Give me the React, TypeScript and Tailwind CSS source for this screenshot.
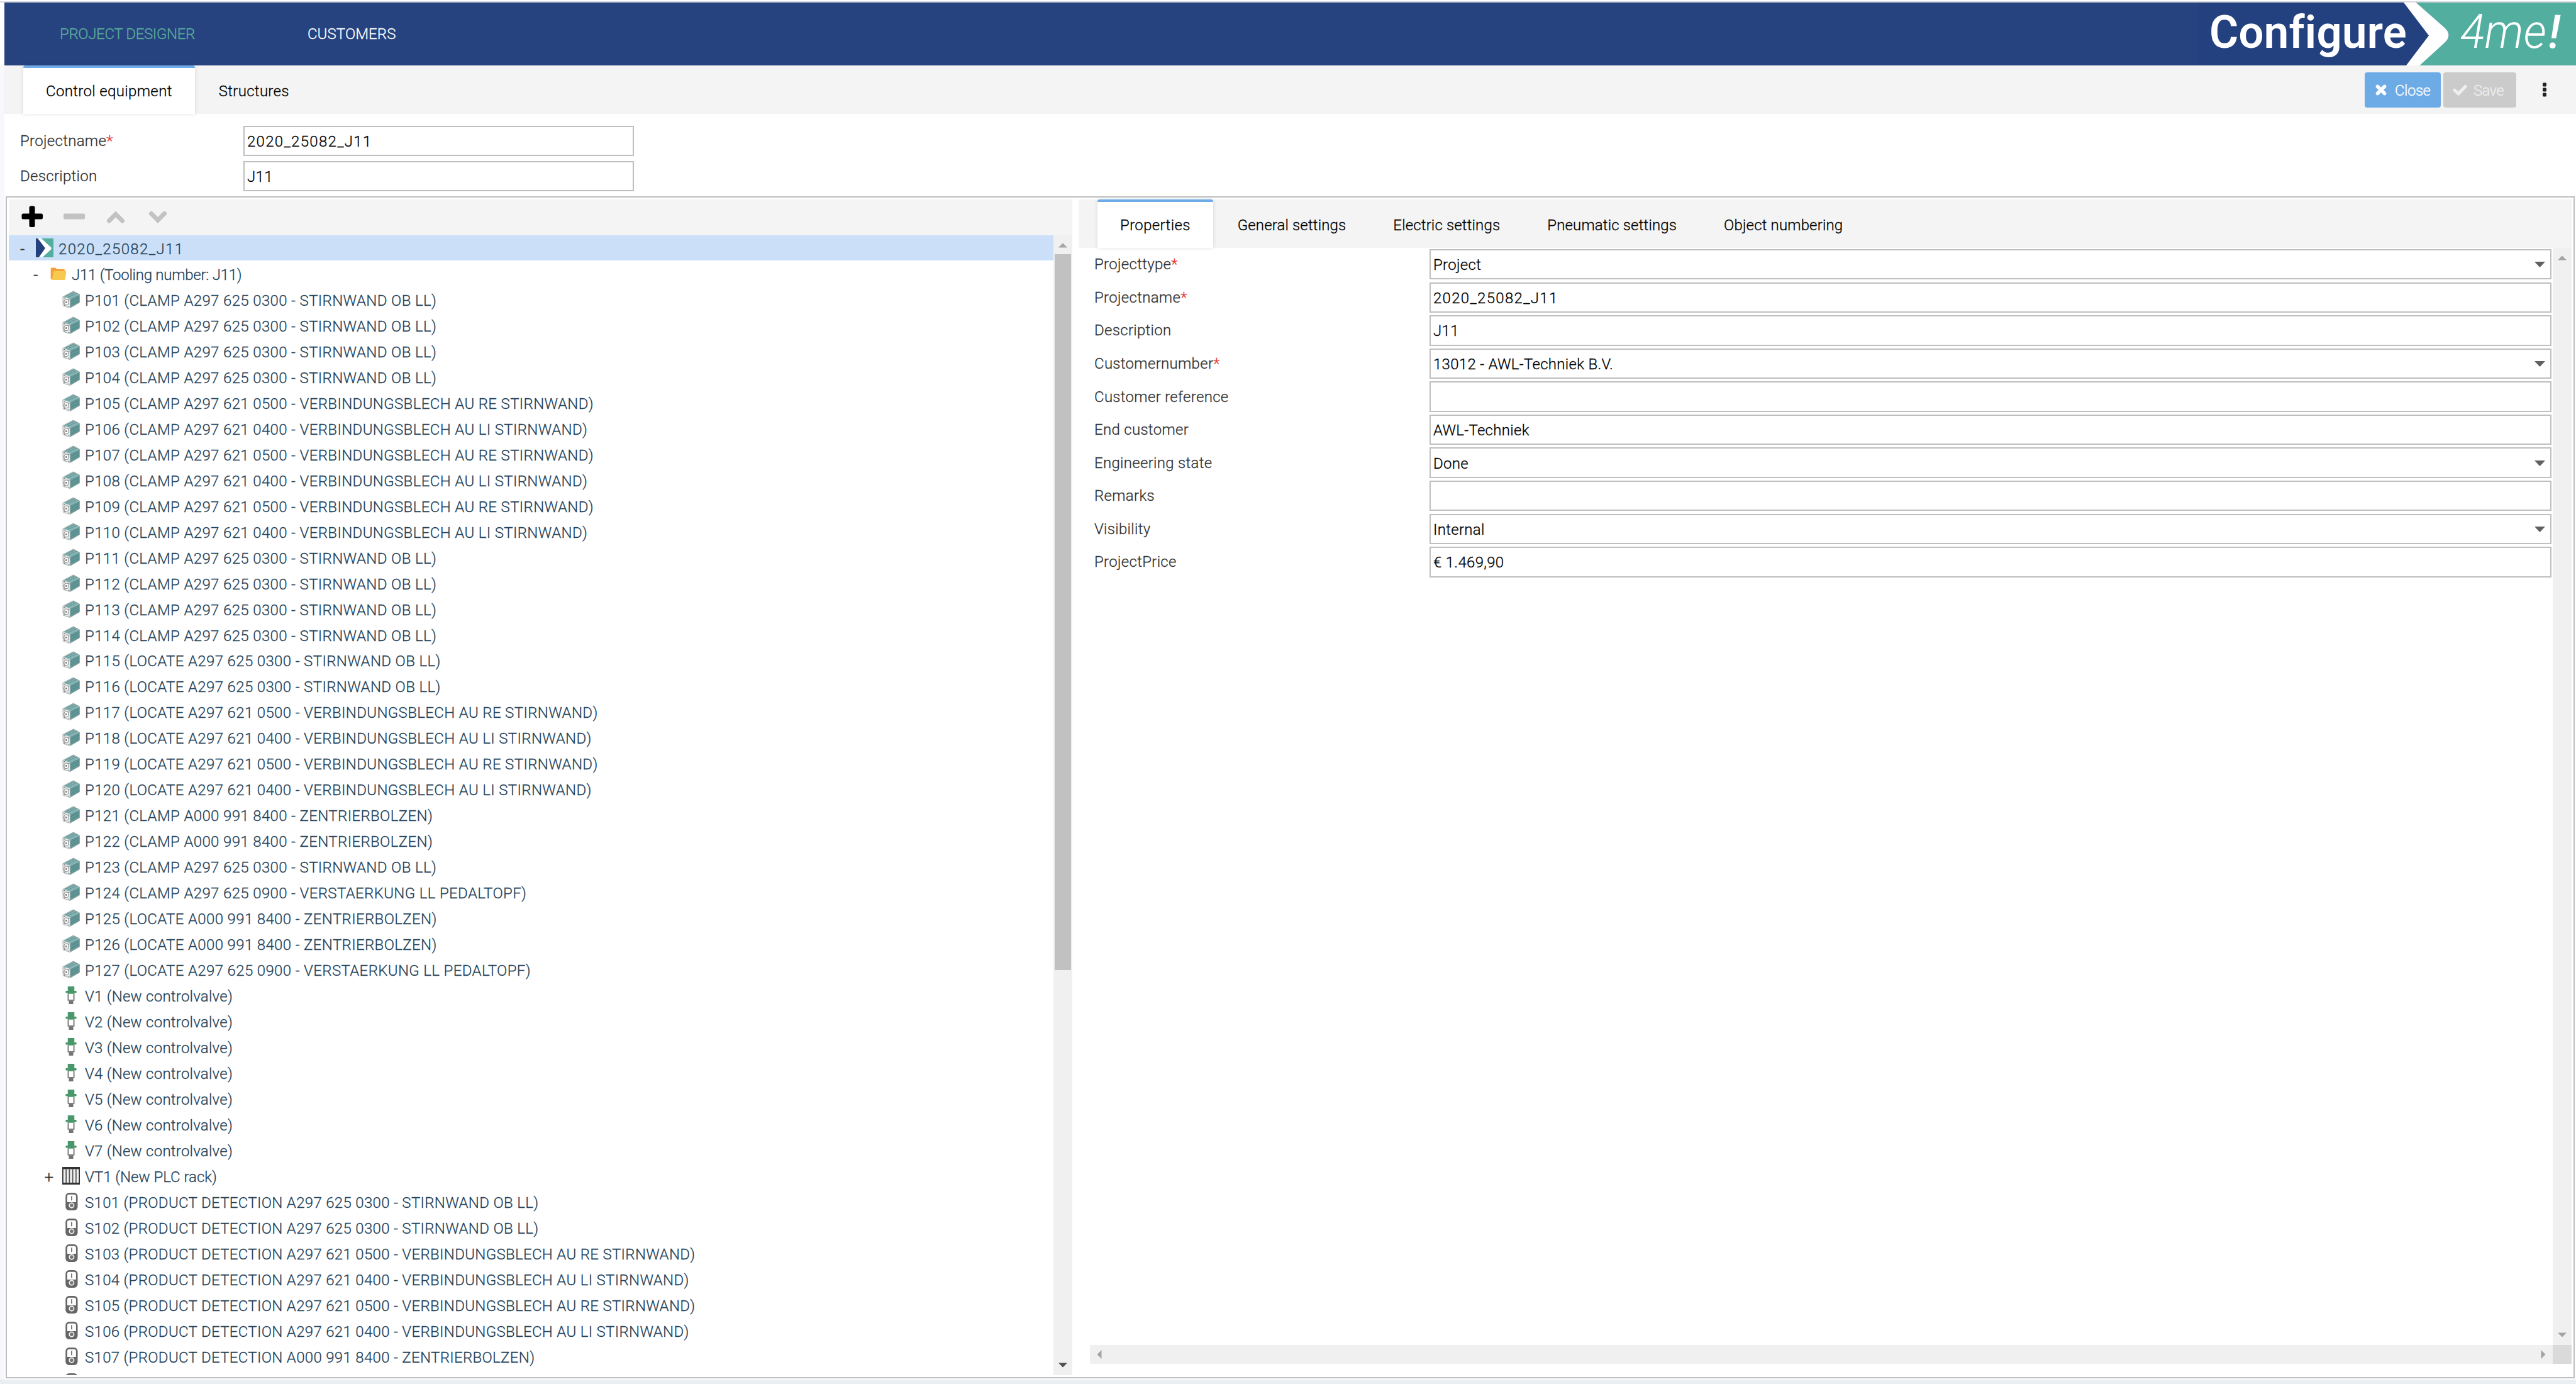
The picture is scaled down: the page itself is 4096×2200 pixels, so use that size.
import type { ReactNode } from "react";

type IconName = "project" | "folder" | "cylinder" | "valve" | "rack" | "sensor";

type TreeItem = {
  label: string;
  icon: IconName;
  level: number;
  toggle?: "-" | "+";
};

type FieldRow = {
  label: string;
  value: string;
  required?: boolean;
  select?: boolean;
};

const stirnwand = "A297 625 0300 - STIRNWAND OB LL";
const blechRe = "A297 621 0500 - VERBINDUNGSBLECH AU RE STIRNWAND";
const blechLi = "A297 621 0400 - VERBINDUNGSBLECH AU LI STIRNWAND";
const bolzen = "A000 991 8400 - ZENTRIERBOLZEN";
const pedaltopf = "A297 625 0900 - VERSTAERKUNG LL PEDALTOPF";

const cylinders = [
  `P101 (CLAMP ${stirnwand})`,
  `P102 (CLAMP ${stirnwand})`,
  `P103 (CLAMP ${stirnwand})`,
  `P104 (CLAMP ${stirnwand})`,
  `P105 (CLAMP ${blechRe})`,
  `P106 (CLAMP ${blechLi})`,
  `P107 (CLAMP ${blechRe})`,
  `P108 (CLAMP ${blechLi})`,
  `P109 (CLAMP ${blechRe})`,
  `P110 (CLAMP ${blechLi})`,
  `P111 (CLAMP ${stirnwand})`,
  `P112 (CLAMP ${stirnwand})`,
  `P113 (CLAMP ${stirnwand})`,
  `P114 (CLAMP ${stirnwand})`,
  `P115 (LOCATE ${stirnwand})`,
  `P116 (LOCATE ${stirnwand})`,
  `P117 (LOCATE ${blechRe})`,
  `P118 (LOCATE ${blechLi})`,
  `P119 (LOCATE ${blechRe})`,
  `P120 (LOCATE ${blechLi})`,
  `P121 (CLAMP ${bolzen})`,
  `P122 (CLAMP ${bolzen})`,
  `P123 (CLAMP ${stirnwand})`,
  `P124 (CLAMP ${pedaltopf})`,
  `P125 (LOCATE ${bolzen})`,
  `P126 (LOCATE ${bolzen})`,
  `P127 (LOCATE ${pedaltopf})`,
];

const valves = ["V1", "V2", "V3", "V4", "V5", "V6", "V7"];

const sensors = [
  `S101 (PRODUCT DETECTION ${stirnwand})`,
  `S102 (PRODUCT DETECTION ${stirnwand})`,
  `S103 (PRODUCT DETECTION ${blechRe})`,
  `S104 (PRODUCT DETECTION ${blechLi})`,
  `S105 (PRODUCT DETECTION ${blechRe})`,
  `S106 (PRODUCT DETECTION ${blechLi})`,
  `S107 (PRODUCT DETECTION ${bolzen})`,
  "",
];

const tree: TreeItem[] = [
  { label: "2020_25082_J11", icon: "project", level: 0, toggle: "-" },
  { label: "J11 (Tooling number: J11)", icon: "folder", level: 1, toggle: "-" },
  ...cylinders.map((label): TreeItem => ({ label, icon: "cylinder", level: 2 })),
  ...valves.map((name): TreeItem => ({ label: `${name} (New controlvalve)`, icon: "valve", level: 2 })),
  { label: "VT1 (New PLC rack)", icon: "rack", level: 2, toggle: "+" },
  ...sensors.map((label): TreeItem => ({ label, icon: "sensor", level: 2 })),
];

const fields: FieldRow[] = [
  { label: "Projecttype", value: "Project", required: true, select: true },
  { label: "Projectname", value: "2020_25082_J11", required: true },
  { label: "Description", value: "J11" },
  { label: "Customernumber", value: "13012 - AWL-Techniek B.V.", required: true, select: true },
  { label: "Customer reference", value: "" },
  { label: "End customer", value: "AWL-Techniek" },
  { label: "Engineering state", value: "Done", select: true },
  { label: "Remarks", value: "" },
  { label: "Visibility", value: "Internal", select: true },
  { label: "ProjectPrice", value: "€ 1.469,90" },
];

const indent = ["pl-[12px]", "pl-[33px]", "pl-[54px]"];

const tracking: Record<IconName, string> = {
  project: "tracking-[1.350px]",
  folder: "tracking-[-0.250px]",
  cylinder: "tracking-[0.360px]",
  valve: "tracking-[0.250px]",
  rack: "tracking-[0px]",
  sensor: "tracking-[0.320px]",
};

function TreeIcon({ name }: { name: IconName }) {
  switch (name) {
    case "project":
      return (
        <svg viewBox="0 0 32 34" preserveAspectRatio="none" className="h-[30px] w-[28px]">
          <rect width="32" height="34" fill="#fff" />
          <path d="M0 0H3.5L17 17.5L5.5 34H0Z" fill="#24417f" />
          <path d="M10 0H32V34H12L27 20.5Q29.5 18 27 15.5Z" fill="#52ae9e" />
        </svg>
      );
    case "folder":
      return (
        <svg viewBox="0 0 32 34" className="h-[30px] w-[28px]">
          <path d="M3 8.500Q3 6 5.500 6H11.500L14.500 8.700H26.500Q28.700 8.700 28.700 11V14L8 27.500H5Q3 27.500 3 25.500Z" fill="#f1a23a" />
          <path d="M9.500 12.500H29.500Q31.500 12.500 31.200 14.500L29.500 26.300Q29.200 28.300 27.500 28.300H5.500L8 14.500Q8.300 12.500 9.500 12.500Z" fill="#f7ca4f" />
        </svg>
      );
    case "cylinder":
      return (
        <svg viewBox="0 0 32 32" className="h-[28px] w-[28px]">
          <path d="M1.500 11L20 1L31.500 7L14 15Z" fill="#85b3b2" />
          <path d="M14 15L31.500 7V21.500L14 31.500Z" fill="#629696" />
          <path d="M1 11L14 15V31.500L1.500 27.500Z" fill="#e6e7e7" />
          <path d="M6 10.500L23.500 2.500M10 12L27 4.500M14.500 20L31 11.500M14.500 25.500L31 16.500" stroke="#4f7f81" strokeWidth="0.800" fill="none" />
          <path d="M1 11L20 1L31.500 7V21.500L14 31.500L1.500 27.500Z" stroke="#9aa3a3" strokeWidth="1" fill="none" />
          <ellipse cx="7.500" cy="21" rx="4.300" ry="5" fill="#fff" stroke="#888" strokeWidth="1.400" />
          <circle cx="7.200" cy="21" r="1.800" fill="#888" />
          <path d="M3 13.500H5M11 16.500H13M3.500 26.500H5.500M11 29H13" stroke="#777" strokeWidth="1.600" />
        </svg>
      );
    case "valve":
      return (
        <svg viewBox="0 0 32 32" className="h-[28px] w-[28px]">
          <path d="M10.800 13V25H21.200V13" fill="#fff" stroke="#7c7c7c" strokeWidth="2.200" />
          <rect x="12" y="25.500" width="8" height="6.500" fill="#747474" />
          <path d="M10 0H22V8H25Q26 8 26 10Q26 12 25 12H22V13.500H10V12H7Q6 12 6 10Q6 8 7 8H10Z" fill="#4b976c" />
        </svg>
      );
    case "rack":
      return (
        <svg viewBox="0 0 32 32" className="h-[28px] w-[28px]">
          <rect width="32" height="32" fill="#333" />
          <rect x="2" y="4" width="28" height="24.500" fill="#f0f0f0" />
          <path d="M7 4V28.500M13 4V28.500M19 4V28.500M25 4V28.500" stroke="#555" strokeWidth="2" />
        </svg>
      );
    case "sensor":
      return (
        <svg viewBox="0 0 32 32" className="h-[28px] w-[28px]">
          <rect x="7.500" y="1.500" width="19" height="29" rx="5" fill="#fff" stroke="#666" strokeWidth="3" />
          <path d="M7 17H27V27Q27 31 22 31H12Q7 31 7 27Z" fill="#666" />
          <rect x="16" y="6" width="2" height="8" fill="#777" />
          <circle cx="17" cy="23" r="4.200" fill="#777" stroke="#f2f2f2" strokeWidth="2" />
        </svg>
      );
  }
}

function Logo() {
  return (
    <svg viewBox="0 0 601 100" className="h-[100px] w-[601px] shrink-0 font-[Roboto]">
      <rect width="601" height="100" fill="#24417f" />
      <path d="M346 0H601V100H352L391 65Q406 52 391 39Z" fill="#52ae9e" />
      <path d="M327 0H346.500L391 39Q406 52 391 65L352.500 100H331L367 52.500Z" fill="#fff" />
      <text x="18" y="71.500" textLength="314" lengthAdjust="spacingAndGlyphs" fontSize="73" fontWeight="600" fill="#fff">
        Configure
      </text>
      <text x="417" y="71.500" textLength="137" lengthAdjust="spacingAndGlyphs" fontSize="76" fontWeight="300" fontStyle="italic" fill="#fff">
        4me
      </text>
      <text x="557" y="71.500" fontSize="74" fontWeight="500" fontStyle="italic" fill="#fff">
        !
      </text>
    </svg>
  );
}

function Arrow({ dir, dark }: { dir: "up" | "down" | "left" | "right"; dark?: boolean }) {
  const paths = {
    up: "M8 19.500H22L15 12.500Z",
    down: "M8 10.500H22L15 17.500Z",
    left: "M18.500 8V22L11.500 15Z",
    right: "M11.500 8V22L18.500 15Z",
  };
  return (
    <svg viewBox="0 0 30 30" className="h-[30px] w-[30px] shrink-0">
      <path d={paths[dir]} fill={dark ? "#505050" : "#a3a3a3"} />
    </svg>
  );
}

function Tab({ children, active }: { children: ReactNode; active?: boolean }) {
  return (
    <div
      className={
        active
          ? "flex items-center rounded-t-[4px] border-t-[4px] border-[#6dabe6] bg-white px-[36px] tracking-[0.350px] shadow-[0_0_6px_rgba(40,60,90,0.16)]"
          : "flex items-center px-[36px] pt-[4px]"
      }
    >
      {children}
    </div>
  );
}

function Input({ value, select }: { value: string; select?: boolean }) {
  return (
    <div className="flex h-full flex-1 items-center justify-between border-2 border-[#bfbfbf] bg-white pt-[2px] pl-[4px] pr-[8px] text-black">
      <span className={value.startsWith("2020") ? "tracking-[1.300px]" : ""}>{value}</span>
      {select && (
        <svg viewBox="0 0 17 10" className="h-[10px] w-[17px]">
          <path d="M0 0H17L8.500 9Z" fill="#606060" />
        </svg>
      )}
    </div>
  );
}

function Label({ children, required }: { children: ReactNode; required?: boolean }) {
  return (
    <span className="pt-[2px] text-[#333]">
      {children}
      {required && <span className="text-[#e8352b]">*</span>}
    </span>
  );
}

function ToolIcon({ children }: { children: ReactNode }) {
  return (
    <svg viewBox="0 0 36 36" className="h-[36px] w-[36px]">
      {children}
    </svg>
  );
}

function TreePane() {
  return (
    <div className="flex w-[1691px] flex-col">
      <div className="flex h-[56.5px] shrink-0 items-center gap-[30.500px] bg-[#f4f4f4] pb-[2px] pl-[19px]">
        <ToolIcon>
          <path d="M4 13.500H13.500V4Q13.500 1.500 16 1.500H20Q22.500 1.500 22.500 4V13.500H32.500Q35 13.500 35 16V20Q35 22.500 32.500 22.500H22.500V32.500Q22.500 35 20 35H16Q13.500 35 13.500 32.500V22.500H4Q1.500 22.500 1.500 20V16Q1.500 13.500 4 13.500Z" fill="#000" />
        </ToolIcon>
        <ToolIcon>
          <rect x="1" y="13.500" width="34" height="9" rx="2" fill="#c2c2c2" />
        </ToolIcon>
        <ToolIcon>
          <path d="M7.500 25L18 14.500L28.500 25" stroke="#c2c2c2" strokeWidth="7" strokeLinejoin="miter" strokeLinecap="round" fill="none" />
        </ToolIcon>
        <ToolIcon>
          <path d="M7.500 13.500L18 24L28.500 13.500" stroke="#c2c2c2" strokeWidth="7" strokeLinejoin="miter" strokeLinecap="round" fill="none" />
        </ToolIcon>
      </div>
      <div className="flex min-h-0 flex-1">
        <div className="flex-1 overflow-hidden">
          {tree.map((item, i) => (
            <div
              key={i}
              className={`flex h-[40.980px] items-center text-[#25435a] ${indent[item.level]} ${i === 0 ? "bg-[#cbe0f8]" : ""}`}
            >
              <span className="w-[20px] pt-[5px] text-center text-[26px] leading-none text-[#333]">
                {item.toggle}
              </span>
              <span className="ml-[11px] flex w-[28px] justify-center">
                <TreeIcon name={item.icon} />
              </span>
              <span className={`ml-[8px] pt-[4px] whitespace-nowrap ${tracking[item.icon]}`}>
                {item.label}
              </span>
            </div>
          ))}
        </div>
        <div className="flex w-[30px] flex-col bg-[#f0f0f0]">
          <Arrow dir="up" />
          <div className="mx-[2px] h-[1138px] bg-[#c1c1c1]" />
          <div className="flex-1" />
          <Arrow dir="down" dark />
        </div>
      </div>
    </div>
  );
}

function PropertiesPane() {
  return (
    <div className="flex flex-1 flex-col">
      <div className="flex h-[77px] shrink-0 gap-[3px] bg-[#f4f4f4] pl-[30px] tracking-[0.150px]">
        <Tab active>Properties</Tab>
        <Tab>General settings</Tab>
        <Tab>Electric settings</Tab>
        <Tab>Pneumatic settings</Tab>
        <Tab>Object numbering</Tab>
      </div>
      <div className="flex min-h-0 flex-1">
        <div className="flex flex-1 flex-col gap-[4.200px] pt-[2px] pr-[2px]">
          {fields.map((f) => (
            <div key={f.label} className="flex h-[48.400px] items-center pl-[25px]">
              <div className="w-[533px]">
                <Label required={f.required}>{f.label}</Label>
              </div>
              <Input value={f.value} select={f.select} />
            </div>
          ))}
        </div>
        <div className="flex w-[30px] flex-col justify-between bg-[#f0f0f0]">
          <Arrow dir="up" />
          <Arrow dir="down" />
        </div>
      </div>
      <div className="mb-[18px] flex h-[30px] shrink-0 pl-[18px]">
        <div className="flex flex-1 justify-between bg-[#f0f0f0]">
          <Arrow dir="left" />
          <Arrow dir="right" />
        </div>
        <div className="w-[30px] bg-[#dadada]" />
      </div>
    </div>
  );
}

export default function App() {
  return (
    <div className="flex h-[2200px] w-[4096px] flex-col overflow-hidden bg-white font-[Roboto,sans-serif] text-[24px] leading-[28px] font-light tracking-[0.300px] text-black [-webkit-text-stroke-width:0.3px]">
      <div className="mt-[2px] h-[2px] shrink-0 bg-[#d8d9df]" />
      <header className="ml-[7px] flex h-[100px] shrink-0 items-center bg-[#26437f]">
        <nav className="flex flex-1 gap-[179px] pl-[88px]">
          <span className="tracking-[-0.350px] text-[#5aab9b]">PROJECT DESIGNER</span>
          <span className="tracking-[0.100px] text-white">CUSTOMERS</span>
        </nav>
        <Logo />
      </header>

      <div className="flex min-h-0 flex-1">
        <div className="w-[7px] bg-[#f6f8fc]" />
        <div className="flex flex-1 flex-col">
          <div className="flex h-[77px] shrink-0 gap-[2px] bg-[#f4f4f4] pl-[30px]">
            <Tab active>Control equipment</Tab>
            <Tab>Structures</Tab>
            <div className="ml-auto flex items-center">
              <button className="flex h-[56px] w-[121px] items-center gap-[13px] rounded-[4px] bg-[#6dabe6] pl-[17px] font-light text-white">
                <svg viewBox="0 0 18 18" className="h-[18px] w-[18px]">
                  <path d="M3.500 3.500L14.500 14.500M14.500 3.500L3.500 14.500" stroke="#fff" strokeWidth="5.600" strokeLinecap="round" />
                </svg>
                <span className="pt-[2px] tracking-[-0.500px]">Close</span>
              </button>
              <button className="ml-[4px] flex h-[56px] w-[116px] items-center gap-[10px] rounded-[4px] bg-[#cbcbcb] pl-[15px] font-light text-[#efefef]">
                <svg viewBox="0 0 23 18" className="h-[18px] w-[23px]">
                  <path d="M3 9.500L9 15L20 3.500" stroke="#efefef" strokeWidth="5" strokeLinecap="round" fill="none" />
                </svg>
                <span className="pt-[2px] tracking-[-0.700px]">Save</span>
              </button>
              <svg viewBox="0 0 8 24" className="mr-[46px] ml-[41px] h-[24px] w-[8px]">
                <rect x="1" y="0.500" width="6" height="6" rx="1.500" fill="#222" />
                <rect x="1" y="8.500" width="6" height="6" rx="1.500" fill="#222" />
                <rect x="1" y="16.500" width="6" height="6" rx="1.500" fill="#222" />
              </svg>
            </div>
          </div>

          <div className="flex h-[131px] shrink-0 flex-col gap-2 pt-[19px] pl-[25px]">
            <div className="flex h-[48px] w-[976px] items-center">
              <div className="w-[355px]">
                <Label required>Projectname</Label>
              </div>
              <Input value="2020_25082_J11" />
            </div>
            <div className="flex h-[48px] w-[976px] items-center">
              <div className="w-[355px]">
                <Label>Description</Label>
              </div>
              <Input value="J11" />
            </div>
          </div>

          <main className="mr-[2px] mb-[2px] ml-[2px] flex min-h-0 flex-1 gap-[10px] border-2 border-[#bfbfbf] p-[3px]">
            <TreePane />
            <PropertiesPane />
          </main>
        </div>
      </div>
      <div className="h-[7px] shrink-0 bg-[#e9eef3]" />
    </div>
  );
}
